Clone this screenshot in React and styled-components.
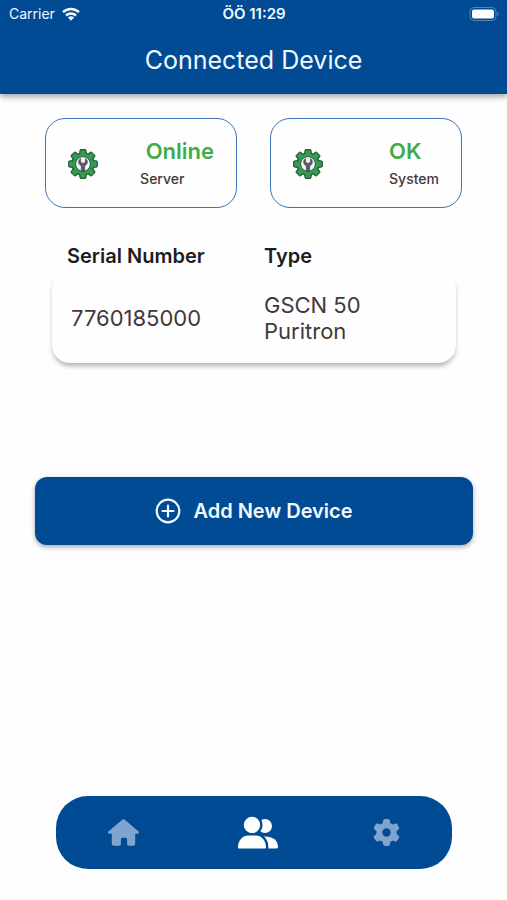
import styled, { createGlobalStyle } from "styled-components";
import { FaGear } from "react-icons/fa6";

const GlobalStyle = createGlobalStyle`
  *,
  *::before,
  *::after {
    box-sizing: border-box;
  }

  body {
    margin: 0;
    background-color: #fefefe;
    color: #1c1c1e;
    font-family: Inter, "Liberation Sans", sans-serif;
  }
`;

const Screen = styled.div`
  display: flex;
  flex-direction: column;
  min-height: 100vh;
`;

const Header = styled.header`
  height: 94px;
  background-color: #014b94;
  color: #f2f9ff;
  box-shadow: 0 3px 6px rgba(0, 0, 0, 0.35);
`;

const StatusBar = styled.div`
  display: grid;
  grid-template-columns: 1fr auto 1fr;
  align-items: center;
  height: 28px;
  padding: 0 8px 0 9px;
  font-size: 14px;
  line-height: 20px;
`;

const Carrier = styled.div`
  display: flex;
  align-items: center;
  gap: 7px;
`;

const Time = styled.time`
  font-size: 15px;
  font-weight: 600;
`;

const Battery = styled.svg`
  justify-self: end;
`;

const Title = styled.h1`
  margin: 0;
  padding-top: 16px;
  font-size: 25px;
  font-weight: 400;
  line-height: 32px;
  text-align: center;
`;

const Main = styled.main`
  flex: 1;
`;

const StatusCards = styled.section`
  display: grid;
  grid-template-columns: 1fr 1fr;
  gap: 33px;
  padding: 24px 45px 0;
`;

const Card = styled.div`
  display: flex;
  align-items: center;
  justify-content: space-between;
  height: 90px;
  padding: 2px 22px 0;
  border: 1px solid #3a74b4;
  border-radius: 20px;
`;

const CardText = styled.div`
  white-space: pre;
`;

const CardValue = styled.div`
  color: #41ac49;
  font-size: 22px;
  font-weight: 600;
  line-height: 30px;
`;

const CardLabel = styled.div`
  color: #43383a;
  font-size: 14px;
  font-weight: 500;
  line-height: 26px;
`;

const DeviceTable = styled.div`
  padding: 34px 51px 0 52px;
`;

const Table = styled.table`
  width: 100%;
  border-spacing: 0;
  table-layout: fixed;
  text-align: left;
`;

const HeadCell = styled.th`
  width: ${(props) => props.$width || "auto"};
  padding: 0 0 0 ${(props) => (props.$first ? "15px" : "0")};
  font-size: 20px;
  font-weight: 600;
  line-height: 28px;
`;

const DeviceRow = styled.tr`
  border-radius: 18px;
  box-shadow: 0 4px 5px -1px rgba(0, 0, 0, 0.3);
`;

const Cell = styled.td`
  height: 93px;
  padding: 2px 80px 0 ${(props) => (props.$first ? "19px" : "0")};
  color: #43383a;
  font-size: 22px;
  line-height: 26px;

  &:first-child {
    padding-right: 0;
  }
`;

const AddButton = styled.button`
  display: flex;
  align-items: center;
  justify-content: center;
  gap: 12px;
  width: calc(100% - 69px);
  height: 68px;
  margin: 114px 34px 0 35px;
  border: 0;
  border-radius: 12px;
  background-color: #014b94;
  box-shadow: 0 2px 5px rgba(0, 0, 0, 0.35);
  color: #f2f9ff;
  font-family: inherit;
  font-size: 20px;
  font-weight: 600;
  cursor: pointer;
`;

const TabBar = styled.nav`
  display: flex;
  align-items: center;
  justify-content: space-between;
  height: 73px;
  margin: 0 55px 31px 56px;
  padding: 0 52px;
  border-radius: 32px;
  background-color: #014b94;
`;

const Tab = styled.a`
  display: flex;
  color: ${(props) => (props.$active ? "#ffffff" : "#7fa5ce")};
`;

function WifiIcon() {
  return (
    <svg width="18" height="14" viewBox="0 0 18 14" aria-hidden="true">
      <g fill="none" stroke="#f2f9ff" strokeWidth="2.5">
        <path d="M1 5.2a11.4 11.4 0 0 1 16 0" />
        <path d="M4 8.5a7.2 7.2 0 0 1 10 0" />
      </g>
      <path d="M5.9 10.6a4.5 4.5 0 0 1 6.2 0L9 13.8z" fill="#f2f9ff" />
    </svg>
  );
}

function BatteryIcon() {
  return (
    <Battery width="30" height="14" viewBox="0 0 30 14" aria-hidden="true">
      <rect
        x="1"
        y="0.5"
        width="26"
        height="13"
        rx="4"
        fill="none"
        stroke="#5583b5"
      />
      <rect x="3" y="2.5" width="22" height="9" rx="2" fill="#ffffff" />
      <path d="M28.3 4.8c1.8.6 1.8 3.8 0 4.4z" fill="#5583b5" />
    </Battery>
  );
}

const TEETH = [0, 45, 90, 135, 180, 225, 270, 315];

function ServiceIcon() {
  return (
    <svg width="30" height="30" viewBox="0 0 30 30" aria-hidden="true">
      <g fill="#2f9e4f" stroke="#2a5a3c" strokeWidth="1.2">
        {TEETH.map((angle) => (
          <path
            key={angle}
            d="M11.4 5.5l.7-4.2q.1-.6.8-.6h4.2q.7 0 .8.6l.7 4.2z"
            transform={`rotate(${angle} 15 15)`}
          />
        ))}
        <circle cx="15" cy="15" r="11" />
      </g>
      <g fill="#2f9e4f">
        {TEETH.map((angle) => (
          <path
            key={angle}
            d="M12.3 6l.5-4h4.4l.5 4z"
            transform={`rotate(${angle} 15 15)`}
          />
        ))}
      </g>
      <circle
        cx="15"
        cy="15"
        r="7.4"
        fill="#f4f4f6"
        stroke="#2a5a3c"
        strokeWidth="1"
      />
      <path
        d="M12.6 9.6v3.6l2.4 1.3 2.4-1.3V9.6c2.6 1.4 3 5.4-.7 7.2v5.4h-3.4v-5.4c-3.7-1.8-3.3-5.8-.7-7.2z"
        fill="#5b5868"
        stroke="#3f3d4a"
        strokeWidth="0.6"
      />
    </svg>
  );
}

function PlusCircleIcon() {
  return (
    <svg width="26" height="26" viewBox="0 0 26 26" aria-hidden="true">
      <g fill="none" stroke="#f2f9ff" strokeWidth="2.2" strokeLinecap="round">
        <circle cx="13" cy="13" r="11.3" />
        <path d="M13 7.5v11M7.5 13h11" />
      </g>
    </svg>
  );
}

function HomeIcon() {
  return (
    <svg width="31" height="27" viewBox="0 0 31 27" aria-hidden="true">
      <path
        d="M14.5.6q1-.9 2 0l13.8 11.6c1.2 1 .6 2.5-.8 2.5h-2.3v10.1q0 2-2 2h-4.2q-1.9 0-1.9-1.9v-4.7q0-1.500-1.500-1.500h-3.200q-1.500 0-1.500 1.500v4.700q0 1.900-1.900 1.900H5.800q-2 0-2-2V14.700H1.500c-1.400 0-2-1.500-.8-2.500z"
        fill="currentColor"
      />
    </svg>
  );
}

function UsersIcon() {
  return (
    <svg width="44" height="34" viewBox="0 0 44 34" aria-hidden="true">
      <g fill="currentColor">
        <circle cx="31" cy="10" r="7" />
        <path d="M29 20.5c9-.8 15 3.5 15 10.3 0 1-.6 1.7-1.6 1.7H29z" />
      </g>
      <g fill="currentColor" stroke="#014b94" strokeWidth="2.4">
        <circle cx="18" cy="9" r="9.4" />
        <path d="M2.8 31.5c0-8 5.4-13.2 11.4-13.2h7.6c6 0 11.4 5.2 11.4 13.2 0 1.4-.7 2.2-2 2.2H4.8c-1.3 0-2-.8-2-2.2z" />
      </g>
    </svg>
  );
}

function StatusCard({ value, label }) {
  return (
    <Card>
      <ServiceIcon />
      <CardText>
        <CardValue>{value}</CardValue>
        <CardLabel>{label}</CardLabel>
      </CardText>
    </Card>
  );
}

function App() {
  return (
    <>
      <GlobalStyle />
      <Screen>
        <Header>
          <StatusBar>
            <Carrier>
              Carrier
              <WifiIcon />
            </Carrier>
            <Time>ÖÖ 11:29</Time>
            <BatteryIcon />
          </StatusBar>
          <Title>Connected Device</Title>
        </Header>

        <Main>
          <StatusCards>
            <StatusCard value=" Online" label="Server" />
            <StatusCard value="OK" label="System" />
          </StatusCards>

          <DeviceTable>
            <Table>
              <thead>
                <tr>
                  <HeadCell scope="col" $first $width="212px">
                    Serial Number
                  </HeadCell>
                  <HeadCell scope="col">Type</HeadCell>
                </tr>
              </thead>
              <tbody>
                <DeviceRow>
                  <Cell $first>7760185000</Cell>
                  <Cell>GSCN 50 Puritron</Cell>
                </DeviceRow>
              </tbody>
            </Table>
          </DeviceTable>

          <AddButton type="button">
            <PlusCircleIcon />
            Add New Device
          </AddButton>
        </Main>

        <TabBar>
          <Tab href="#home" aria-label="Home">
            <HomeIcon />
          </Tab>
          <Tab href="#devices" aria-label="Devices" $active>
            <UsersIcon />
          </Tab>
          <Tab href="#settings" aria-label="Settings">
            <FaGear size={27} />
          </Tab>
        </TabBar>
      </Screen>
    </>
  );
}

export default App;
